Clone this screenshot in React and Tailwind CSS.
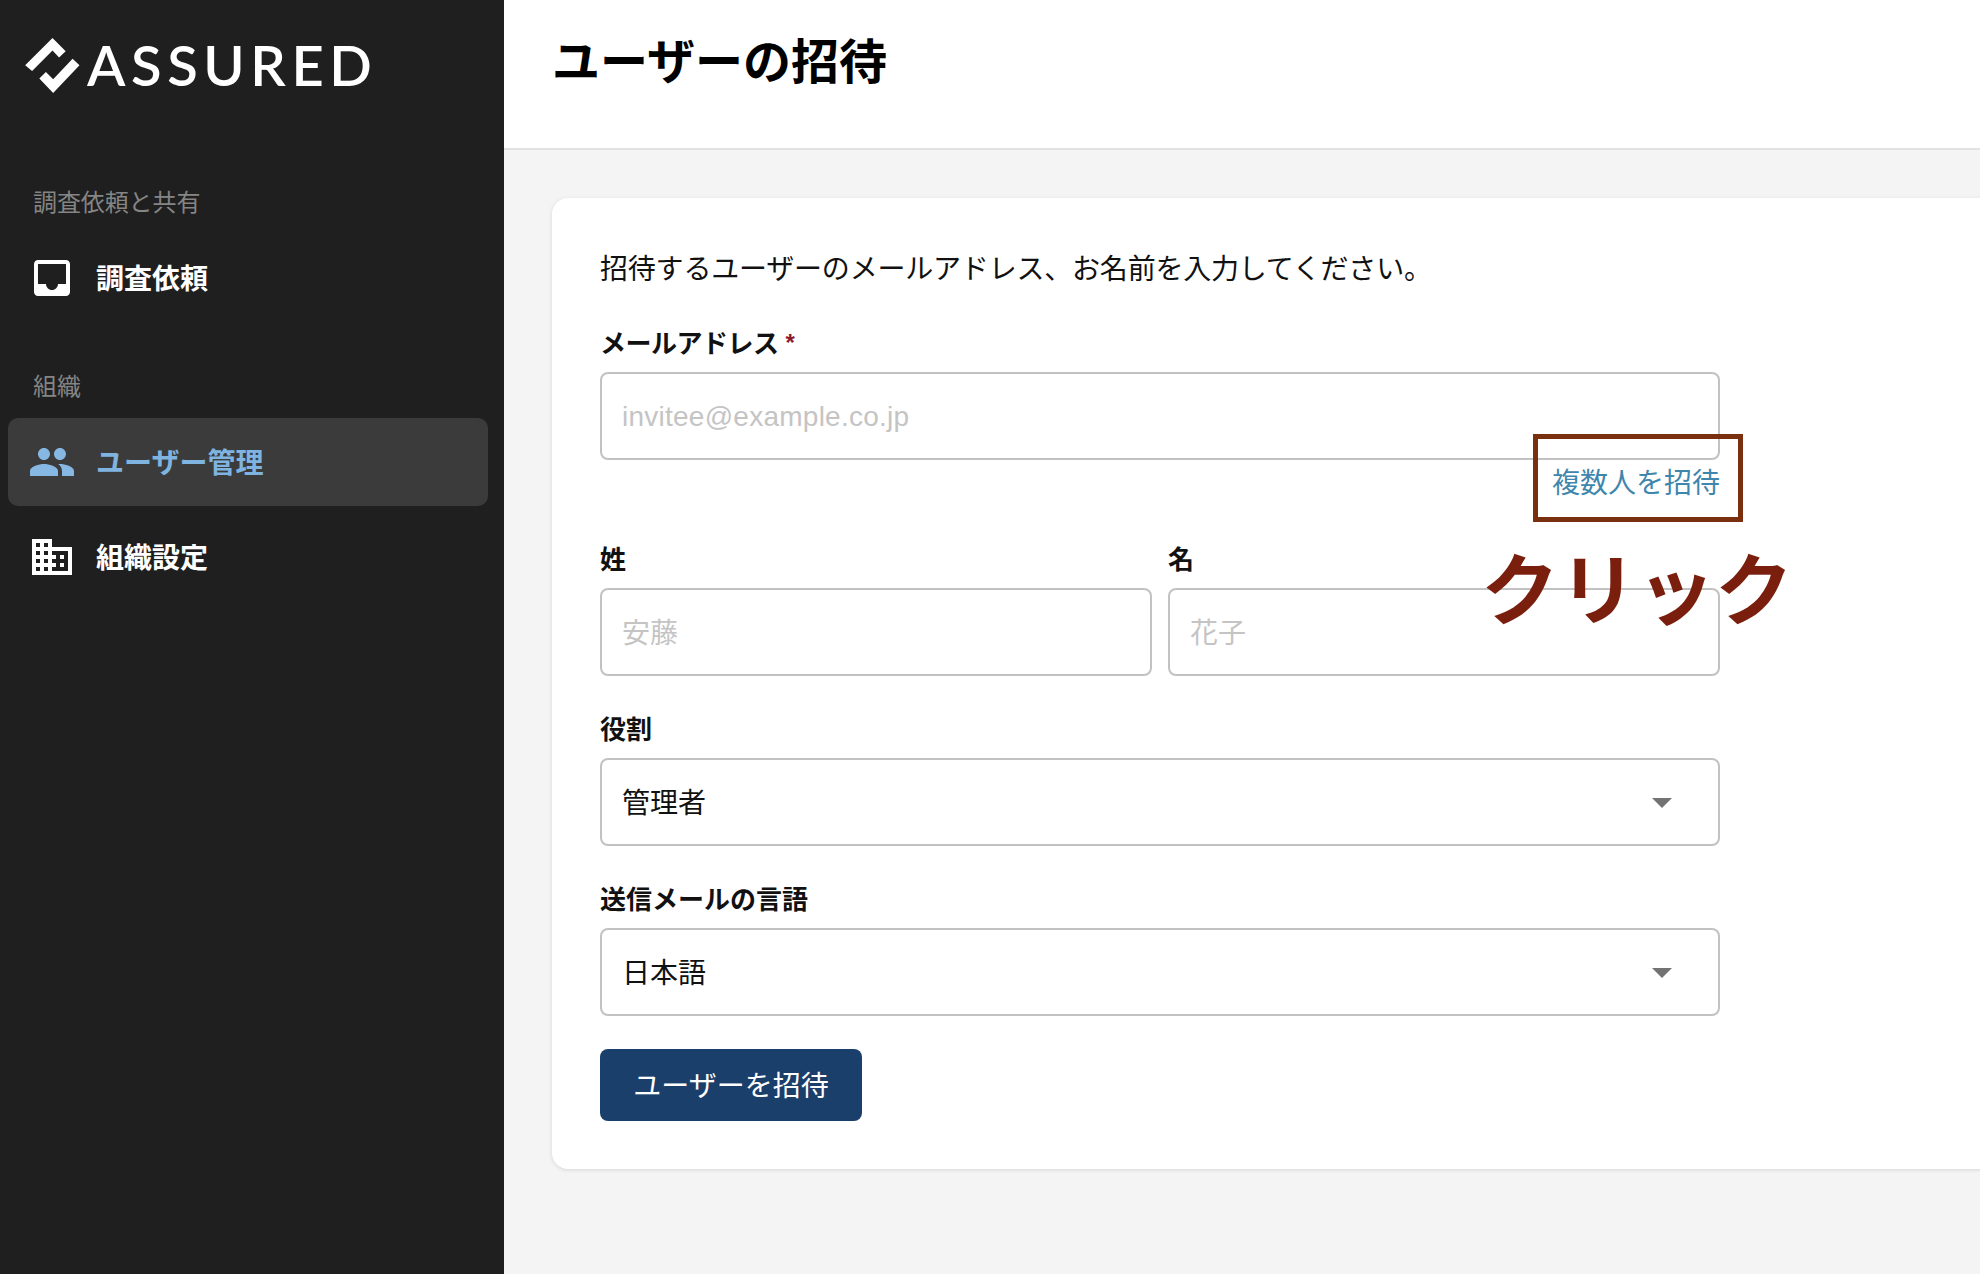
import React from "react";

const jp = "font-['Noto_Sans_CJK_JP',sans-serif]";

const LogoMark = () => (
  <svg width="55" height="55" viewBox="75 115 166 167" fill="#fff">
    <polygon points="75,198 158,115 198,155 178,174 158,153 96,215" />
    <polygon points="118,238 138,218 160,240 219,178 240,198 160,282" />
  </svg>
);

const InboxIcon = () => (
  <svg width="48" height="48" viewBox="0 0 24 24" fill="#fff">
    <path d="M19 3H4.99c-1.11 0-1.98.89-1.98 2L3 19c0 1.1.88 2 1.99 2H19c1.1 0 2-.9 2-2V5c0-1.11-.9-2-2-2zm0 12h-4c0 1.66-1.35 3-3 3s-3-1.34-3-3H4.99V5H19v10z" />
  </svg>
);

const PeopleIcon = () => (
  <svg width="48" height="48" viewBox="0 0 24 24" fill="#86b8e3">
    <path d="M16 11c1.66 0 2.99-1.34 2.99-3S17.66 5 16 5c-1.66 0-3 1.34-3 3s1.34 3 3 3zm-8 0c1.66 0 2.99-1.34 2.99-3S9.66 5 8 5C6.34 5 5 6.34 5 8s1.34 3 3 3zm0 2c-2.33 0-7 1.17-7 3.5V19h14v-2.5c0-2.33-4.67-3.5-7-3.5zm8 0c-.29 0-.62.02-.97.05 1.16.84 1.97 1.97 1.97 3.45V19h6v-2.5c0-2.33-4.67-3.5-7-3.5z" />
  </svg>
);

const DomainIcon = () => (
  <svg width="48" height="48" viewBox="0 0 24 24" fill="#fff">
    <path d="M12 7V3H2v18h20V7H12zM6 19H4v-2h2v2zm0-4H4v-2h2v2zm0-4H4V9h2v2zm0-4H4V5h2v2zm4 12H8v-2h2v2zm0-4H8v-2h2v2zm0-4H8V9h2v2zm0-4H8V5h2v2zm10 12h-8v-2h2v-2h-2v-2h2v-2h-2V9h8v10zm-2-8h-2v2h2v-2zm0 4h-2v2h2v-2z" />
  </svg>
);

const Caret = () => (
  <svg width="20" height="10" viewBox="0 0 20 10" fill="#737373" className="mt-[2px]">
    <polygon points="0,0 20,0 10,10" />
  </svg>
);

const Label = ({ children, required }) => (
  <label className="flex items-center h-[40px] mb-[11px] text-[26px] font-bold text-[#111]">
    {required ? <span className="tracking-[-0.5px]">{children}</span> : children}
    {required && (
      <span className="ml-[7px] pt-[4px] text-[24px] leading-none text-[#8b1a2b] font-['Liberation_Sans',sans-serif]">*</span>
    )}
  </label>
);

const TextInput = ({ placeholder, latin }) => (
  <input
    placeholder={placeholder}
    className={
      latin
        ? "block w-full h-[88px] px-[20px] pt-[2px] tracking-[0.25px] bg-white border-2 border-[#c2c2c2] rounded-lg text-[28px] font-['Liberation_Sans',sans-serif] placeholder:text-[#c4c4c4]"
        : "block w-full h-[88px] px-[20px] pb-[2px] bg-white border-2 border-[#c2c2c2] rounded-lg text-[28px] placeholder:text-[#c4c4c4]"
    }
  />
);

const SelectBox = ({ value }) => (
  <div className="flex items-center justify-between h-[88px] pl-[20px] pr-[46px] bg-white border-2 border-[#c2c2c2] rounded-lg text-[28px] text-[#111]">
    <span className="pb-[2px]">{value}</span>
    <Caret />
  </div>
);

const NavItem = ({ icon, children, active }) => (
  <div
    className={
      active
        ? "flex items-center h-[88px] ml-2 mr-4 pl-5 gap-5 rounded-[10px] bg-[#3b3b3b] text-[#7fb3e0] text-[28px] font-bold"
        : "flex items-center h-[88px] ml-2 mr-4 pl-5 gap-5 rounded-[10px] text-white text-[28px] font-bold"
    }
  >
    {icon}
    <span className="pb-[2px]">{children}</span>
  </div>
);

export default function App() {
  return (
    <div className={`relative flex w-screen h-screen overflow-hidden bg-[#f4f4f4] ${jp}`}>
      {/* Sidebar */}
      <aside className="w-[504px] shrink-0 bg-[#1f1f1f]">
        <div className="flex items-center h-[131px] pl-[25px] gap-[7px]">
          <LogoMark />
          <span className="pb-[2px] text-[56px] leading-none font-semibold tracking-[5.6px] text-white font-['Lato',sans-serif]">
            ASSURED
          </span>
        </div>

        <p className="mt-[54px] mb-[17px] pl-[33px] h-[32px] leading-[32px] text-[24px] tracking-[-0.1px] text-[#858585]">調査依頼と共有</p>
        <NavItem icon={<InboxIcon />}>調査依頼</NavItem>

        <p className="mt-[47px] mb-[17px] pl-[33px] h-[32px] leading-[32px] text-[24px] text-[#858585]">組織</p>
        <NavItem icon={<PeopleIcon />} active>
          ユーザー管理
        </NavItem>
        <div className="mt-[7px]">
          <NavItem icon={<DomainIcon />}>組織設定</NavItem>
        </div>
      </aside>

      {/* Main */}
      <main className="flex-1 min-w-0">
        <header className="flex items-start h-[150px] pl-12 pt-[22px] bg-white border-b-2 border-[#e2e2e2]">
          <h1 className="text-[48px] leading-[72px] font-bold text-black">ユーザーの招待</h1>
        </header>

        <div className="pl-12 pt-12">
          <div className="w-[1500px] p-12 bg-white rounded-2xl shadow-[0_1px_4px_rgba(0,0,0,0.12)]">
            <div className="w-[1120px]">
              <p className="h-[42px] leading-[42px] text-[28px] tracking-[-0.2px] text-[#111]">
                招待するユーザーのメールアドレス、お名前を入力してください。
              </p>

              <div className="mt-[33px]">
                <Label required>メールアドレス</Label>
                <TextInput placeholder="invitee@example.co.jp" latin />
              </div>
              <div className="h-[42px] leading-[42px] text-right text-[28px] text-[#3f86ad]">複数人を招待</div>

              <div className="mt-[35px] flex gap-4">
                <div className="flex-1">
                  <Label>姓</Label>
                  <TextInput placeholder="安藤" />
                </div>
                <div className="flex-1">
                  <Label>名</Label>
                  <TextInput placeholder="花子" />
                </div>
              </div>

              <div className="mt-[31px]">
                <Label>役割</Label>
                <SelectBox value="管理者" />
              </div>

              <div className="mt-[31px]">
                <Label>送信メールの言語</Label>
                <SelectBox value="日本語" />
              </div>

              <button className="mt-[33px] w-[262px] h-[72px] pb-[2px] rounded-lg bg-[#1b3f6b] text-[28px] text-white">
                ユーザーを招待
              </button>
            </div>
          </div>
        </div>
      </main>

      {/* Annotation over the form */}
      <div className="absolute left-[1533px] top-[434px] w-[210px] h-[88px] border-[5px] border-[#7a2f0f]" />
      <div className="absolute left-[1481px] top-[525px] text-[78px] leading-[120px] font-bold text-[#7a1f0e] whitespace-nowrap">
        クリック
      </div>
    </div>
  );
}
